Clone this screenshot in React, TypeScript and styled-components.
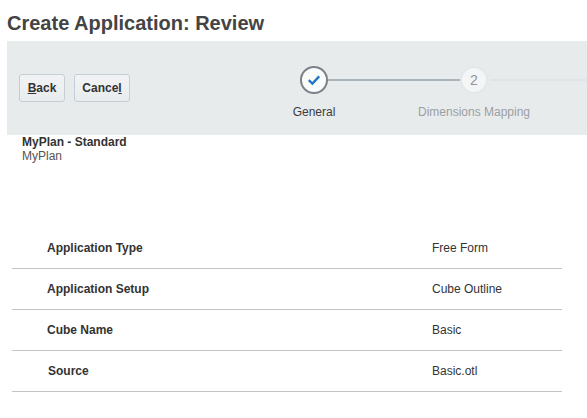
import React from "react";
import styled, { createGlobalStyle } from "styled-components";

const Global = createGlobalStyle`
  html, body { margin: 0; padding: 0; background: #fff; overflow: hidden; }
  body { font-family: "Liberation Sans", Arial, sans-serif; color: #333; }
`;

const Page = styled.div`
  width: 587px;
  height: 418px;
  overflow: hidden;
  display: flex;
  flex-direction: column;
`;

const Title = styled.h1`
  margin: 0;
  padding: 11px 0 0 7px;
  height: 41px;
  flex: none;
  box-sizing: border-box;
  font-size: 20px;
  line-height: 24px;
  font-weight: 700;
  color: #444;
  white-space: nowrap;
`;

const Band = styled.div`
  margin-left: 7px;
  height: 94px;
  flex: none;
  background: #e8ebec;
  display: flex;
  overflow: hidden;
`;

const Buttons = styled.div`
  display: flex;
  align-items: center;
  gap: 9px;
  padding: 0 0 1px 12px;
  width: 227px;
  flex: none;
  box-sizing: border-box;
`;

const Button = styled.button<{ $w: number }>`
  width: ${(p) => p.$w}px;
  height: 28px;
  box-sizing: border-box;
  padding: 0;
  border: 1px solid #c4ced7;
  border-radius: 3px;
  background: linear-gradient(#f1f3f4, #e9ecee);
  font: 700 12px "Liberation Sans", Arial, sans-serif;
  color: #333;
  u { text-decoration: underline; }
`;

const Steps = styled.ol`
  list-style: none;
  margin: 0;
  padding: 25px 0 0;
  display: flex;
`;

const Step = styled.li`
  width: 160px;
  flex: none;
  display: flex;
  flex-direction: column;
  align-items: center;
  position: relative;
`;

const Connector = styled.span<{ $active?: boolean }>`
  position: absolute;
  top: 13px;
  left: ${(p) => (p.$active ? 94 : 96)}px;
  width: ${(p) => (p.$active ? 132 : 160)}px;
  height: 2px;
  background: ${(p) => (p.$active ? "#a9b3ba" : "#e1e4e6")};
`;

const DoneCircle = styled.span`
  width: 28px;
  height: 28px;
  box-sizing: border-box;
  border: 2px solid #7b8288;
  border-radius: 50%;
  background: #fbfcfc;
  display: flex;
  align-items: center;
  justify-content: center;
`;

const NumCircle = styled.span`
  width: 28px;
  height: 28px;
  box-sizing: border-box;
  border: 2px solid #e3e7ea;
  border-radius: 50%;
  background: #f3f5f7;
  display: flex;
  align-items: center;
  justify-content: center;
  font-size: 14px;
  color: #8f959a;
`;

const StepLabel = styled.span<{ $muted?: boolean }>`
  margin-top: 10px;
  font-size: 12px;
  line-height: 16px;
  white-space: nowrap;
  color: ${(p) => (p.$muted ? "#9a9fa4" : "#3c3c3c")};
`;

const Summary = styled.div`
  padding: 0 0 0 22px;
  height: 93px;
  flex: none;
  box-sizing: border-box;
`;

const SummaryName = styled.div`
  font-size: 12px;
  line-height: 14px;
  font-weight: 700;
  color: #333;
`;

const SummarySub = styled.div`
  font-size: 12px;
  line-height: 14px;
  color: #555;
`;

const Rows = styled.div`
  margin: 0 25px 0 12px;
  display: flex;
  flex-direction: column;
`;

const Row = styled.div`
  height: 41px;
  flex: none;
  box-sizing: border-box;
  border-bottom: 1px solid #c4c4c4;
  display: flex;
  align-items: center;
  font-size: 12px;
`;

const Label = styled.div<{ $nudge?: number }>`
  width: 420px;
  flex: none;
  padding-left: ${(p) => 35 + (p.$nudge ?? 0)}px;
  box-sizing: border-box;
  font-weight: 700;
  color: #333;
`;

const Value = styled.div`
  color: #333;
`;

const rows = [
  { label: "Application Type", value: "Free Form" },
  { label: "Application Setup", value: "Cube Outline" },
  { label: "Cube Name", value: "Basic" },
  { label: "Source", value: "Basic.otl", nudge: 1 },
];

export default function App() {
  return (
    <Page>
      <Global />
      <Title>Create Application: Review</Title>
      <Band>
        <Buttons>
          <Button $w={46}><u>B</u>ack</Button>
          <Button $w={56}>Cance<u>l</u></Button>
        </Buttons>
        <Steps>
          <Step>
            <DoneCircle>
              <svg width="14" height="12" viewBox="0 0 14 12">
                <path d="M1.8 6.2 L5.4 9.6 L12.2 2.4" fill="none" stroke="#1f74c9" strokeWidth="2.3" />
              </svg>
            </DoneCircle>
            <Connector $active />
            <StepLabel>General</StepLabel>
          </Step>
          <Step>
            <NumCircle>2</NumCircle>
            <Connector />
            <StepLabel $muted>Dimensions Mapping</StepLabel>
          </Step>
        </Steps>
      </Band>
      <Summary>
        <SummaryName>MyPlan - Standard</SummaryName>
        <SummarySub>MyPlan</SummarySub>
      </Summary>
      <Rows>
        {rows.map((r) => (
          <Row key={r.label}>
            <Label $nudge={r.nudge}>{r.label}</Label>
            <Value>{r.value}</Value>
          </Row>
        ))}
      </Rows>
    </Page>
  );
}
